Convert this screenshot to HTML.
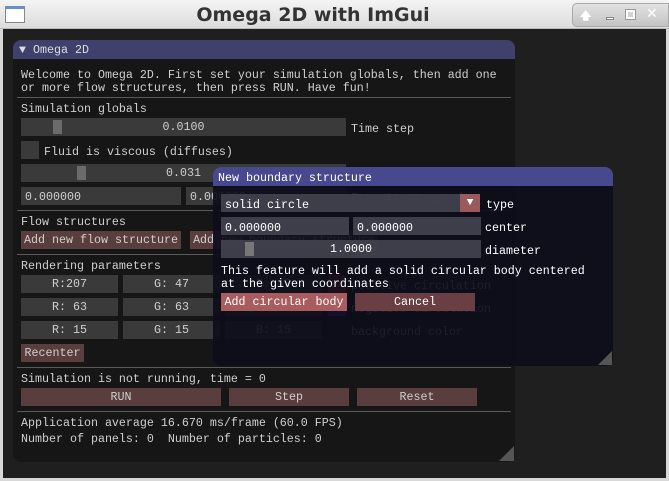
<!DOCTYPE html>
<html><head><meta charset="utf-8"><style>
*{margin:0;padding:0;box-sizing:border-box}
body{width:669px;height:481px;overflow:hidden;background:#1f1f1f;font-family:"Liberation Mono","DejaVu Sans Mono",monospace;font-size:11.67px;color:#cfcfcf;position:relative}
.a{position:absolute;white-space:pre;line-height:13px;margin-top:1px}
.f{position:absolute;background:#3a3a3a}
.b{position:absolute;background:#5a3d3d;text-align:center;line-height:19px;white-space:pre}
.c{text-align:center;line-height:19px}
.sep{position:absolute;height:1px;background:#5a5a5a;left:17px;width:494px}
.g{position:absolute;background:#6b6b6b;width:9px;top:2px;height:14px}
.f .a{margin-top:0}
</style></head><body>
<div style="position:absolute;left:0;top:0;width:669px;height:29px;background:linear-gradient(#f4f4f4,#dcdcdc);border-bottom:1px solid #bbb"></div>
<div style="position:absolute;left:5px;top:6px;width:20px;height:17px;border:1px solid #888;background:#fff;border-top:3px solid #6a8ec8"></div>
<div style="position:absolute;left:0;width:626px;top:3px;text-align:center;font-family:'DejaVu Sans','Liberation Sans',sans-serif;font-weight:bold;font-size:19px;line-height:24px;color:#333;white-space:pre">Omega 2D with ImGui</div>
<div style="position:absolute;left:572px;top:3px;width:97px;height:24px;background:linear-gradient(#e2e2e2,#c4c4c4);border:1px solid #aaa;border-radius:5px 0 0 5px"></div>
<div style="position:absolute;left:580px;top:7px;font-family:'DejaVu Sans',sans-serif;font-size:11px;color:#fff;font-weight:bold">🡅</div>
<div style="position:absolute;left:606px;top:17px;width:8px;height:3px;background:#fff;border:1px solid #888"></div>
<div style="position:absolute;left:626px;top:10px;width:9px;height:9px;border:2px solid #fff;outline:1px solid #999"></div>
<div style="position:absolute;left:646px;top:6px;font-family:'DejaVu Sans',sans-serif;font-size:14px;color:#fff;font-weight:bold">✕</div>
<div style="position:absolute;left:0;top:29px;width:3px;height:452px;background:#d8d8d8"></div>
<div style="position:absolute;left:666px;top:29px;width:3px;height:452px;background:#d8d8d8"></div>
<div style="position:absolute;left:0;top:478px;width:669px;height:3px;background:#d8d8d8"></div>

<div style="position:absolute;left:13px;top:40px;width:502px;height:422px;background:#161616;border-radius:8px;overflow:hidden">
<div style="height:19px;background:#40406c"></div></div>
<div style="position:absolute;left:499px;top:446px;width:0;height:0;border-left:15px solid transparent;border-bottom:15px solid #555"></div>
<div class="a" style="left:19px;top:43px;color:#ddd">▼ Omega 2D</div>
<div class="a" style="left:21px;top:68px">Welcome to Omega 2D. First set your simulation globals, then add one
or more flow structures, then press RUN. Have fun!</div>
<div class="sep" style="top:97px"></div>
<div class="a" style="left:21px;top:102px">Simulation globals</div>
<div class="f c" style="left:21px;top:118px;width:325px;height:18px">0.0100<div class="g" style="left:32px"></div></div>
<div class="a" style="left:351px;top:122px">Time step</div>
<div class="f" style="left:21px;top:141px;width:18px;height:18px"></div>
<div class="a" style="left:44px;top:145px">Fluid is viscous (diffuses)</div>
<div class="f c" style="left:21px;top:164px;width:325px;height:18px">0.031<div class="g" style="left:56px"></div></div>
<div class="a" style="left:351px;top:168px">Particle spacing</div>
<div class="f" style="left:21px;top:187px;width:160px;height:18px"><span class="a" style="left:4px;top:4px">0.000000</span></div>
<div class="f" style="left:186px;top:187px;width:160px;height:18px"><span class="a" style="left:4px;top:4px">0.000000</span></div>
<div class="a" style="left:351px;top:191px">Freestream speed</div>
<div class="sep" style="top:210px"></div>
<div class="a" style="left:21px;top:215px">Flow structures</div>
<div class="b" style="left:21px;top:231px;width:160px;height:18px">Add new flow structure</div>
<div class="b" style="left:190px;top:231px;width:188px;height:18px">Add new boundary structure</div>
<div class="sep" style="top:254px"></div>
<div class="a" style="left:21px;top:259px">Rendering parameters</div>
<div class="f c" style="left:21px;top:275px;width:97px;height:18px">R:207</div>
<div class="f c" style="left:123px;top:275px;width:97px;height:18px">G: 47</div>
<div class="f c" style="left:225px;top:275px;width:97px;height:18px">B: 47</div>
<div style="position:absolute;left:328px;top:275px;width:18px;height:18px;background:#cf2f2f"></div>
<div class="a" style="left:351px;top:279px">positive circulation</div>
<div class="f c" style="left:21px;top:298px;width:97px;height:18px">R: 63</div>
<div class="f c" style="left:123px;top:298px;width:97px;height:18px">G: 63</div>
<div class="f c" style="left:225px;top:298px;width:97px;height:18px">B:255</div>
<div style="position:absolute;left:328px;top:298px;width:18px;height:18px;background:#3f3fff"></div>
<div class="a" style="left:351px;top:302px">negative circulation</div>
<div class="f c" style="left:21px;top:321px;width:97px;height:18px">R: 15</div>
<div class="f c" style="left:123px;top:321px;width:97px;height:18px">G: 15</div>
<div class="f c" style="left:225px;top:321px;width:97px;height:18px">B: 15</div>
<div style="position:absolute;left:328px;top:321px;width:18px;height:18px;background:#0f0f0f"></div>
<div class="a" style="left:351px;top:325px">background color</div>
<div class="b" style="left:21px;top:344px;width:63px;height:18px">Recenter</div>
<div class="sep" style="top:367px"></div>
<div class="a" style="left:21px;top:372px">Simulation is not running, time = 0</div>
<div class="b" style="left:21px;top:388px;width:200px;height:18px">RUN</div>
<div class="b" style="left:229px;top:388px;width:120px;height:18px">Step</div>
<div class="b" style="left:357px;top:388px;width:120px;height:18px">Reset</div>
<div class="sep" style="top:411px"></div>
<div class="a" style="left:21px;top:416px">Application average 16.670 ms/frame (60.0 FPS)</div>
<div class="a" style="left:21px;top:432px">Number of panels: 0  Number of particles: 0</div>

<div style="position:absolute;left:213px;top:167px;width:400px;height:199px;background:rgba(14,14,28,0.92);border-radius:8px;overflow:hidden;color:#fff">
<div style="height:19px;background:rgba(76,76,150,0.95)"></div></div>
<div style="position:absolute;left:598px;top:351px;width:0;height:0;border-left:14px solid transparent;border-bottom:14px solid #555"></div>
<div class="a" style="left:218px;top:171px;color:#fff">New boundary structure</div>
<div style="position:absolute;left:221px;top:194px;width:259px;height:18px;background:rgba(70,70,82,0.85)"></div>
<div class="a" style="left:225px;top:198px;color:#fff">solid circle</div>
<div style="position:absolute;left:460px;top:194px;width:20px;height:18px;background:#9a5a5c;color:#fff;text-align:center;line-height:18px;font-size:11px">▼</div>
<div class="a" style="left:486px;top:198px;color:#fff">type</div>
<div style="position:absolute;left:221px;top:217px;width:128px;height:18px;background:rgba(70,70,82,0.85)"></div>
<div class="a" style="left:225px;top:221px;color:#fff">0.000000</div>
<div style="position:absolute;left:353px;top:217px;width:128px;height:18px;background:rgba(70,70,82,0.85)"></div>
<div class="a" style="left:357px;top:221px;color:#fff">0.000000</div>
<div class="a" style="left:485px;top:221px;color:#fff">center</div>
<div style="position:absolute;left:221px;top:240px;width:260px;height:18px;background:rgba(70,70,82,0.85);color:#fff" class="c">1.0000<div class="g" style="left:24px;background:#777"></div></div>
<div class="a" style="left:485px;top:244px;color:#fff">diameter</div>
<div class="a" style="left:221px;top:264px;color:#fff">This feature will add a solid circular body centered
at the given coordinates</div>
<div class="b" style="left:221px;top:293px;width:126px;height:18px;background:#a85c5e;color:#fff">Add circular body</div>
<div class="b" style="left:355px;top:293px;width:120px;height:18px;background:#6a3f44;color:#fff">Cancel</div>
</body></html>
